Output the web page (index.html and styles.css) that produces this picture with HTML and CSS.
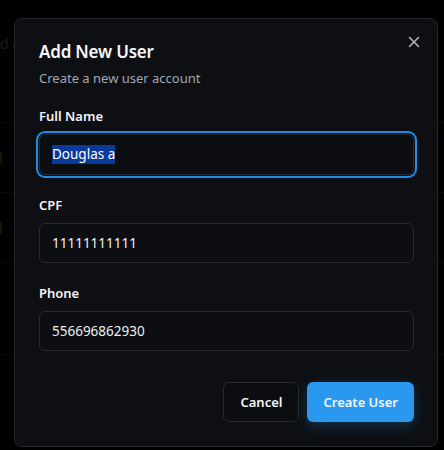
FILE: index.html
```html
<!DOCTYPE html>
<html>
<head>
<meta charset="utf-8">
<link rel="stylesheet" href="styles.css">
</head>
<body>
<div class="page">
  <div class="bg-head"><span class="bg-text">d a</span></div>
  <div class="bg-row"><span class="bg-mark"></span></div>
  <div class="bg-row"><span class="bg-mark"></span></div>
  <div class="bg-row last"></div>
</div>
<div class="overlay">
  <div class="modal">
    <button class="close" aria-label="Close">
      <svg width="12" height="12" viewBox="0 0 12 12"><path d="M1.5 1.5 L10.5 10.5 M10.5 1.5 L1.5 10.5" stroke="#b6bac2" stroke-width="1.5" stroke-linecap="round" fill="none"/></svg>
    </button>
    <div class="header">
      <h2 class="title">Add New User</h2>
      <p class="subtitle">Create a new user account</p>
    </div>
    <div class="form">
      <div class="field">
        <label class="label">Full Name</label>
        <div class="input focused"><span class="sel">Douglas a</span></div>
      </div>
      <div class="field">
        <label class="label">CPF</label>
        <div class="input">11111111111</div>
      </div>
      <div class="field">
        <label class="label">Phone</label>
        <div class="input">556696862930</div>
      </div>
    </div>
    <div class="actions">
      <button class="btn btn-outline">Cancel</button>
      <button class="btn btn-primary">Create User</button>
    </div>
  </div>
</div>
</body>
</html>
```

FILE: styles.css
```css
* { box-sizing: border-box; }
html, body { margin: 0; padding: 0; }
body {
  background: #030405;
  width: 444px;
  height: 450px;
  overflow: hidden;
  font-family: "Noto Sans", "Open Sans", sans-serif;
  color: #f1f3f5;
  position: relative;
}
.page {
  display: flex;
  flex-direction: column;
}
.bg-head {
  height: 123px;
  border-bottom: 1px solid #111418;
  padding: 32px 0 0 0;
}
.bg-text {
  display: inline-block;
  margin-left: 0;
  font-size: 14px;
  color: #3a3d42;
}
.bg-row {
  height: 70px;
  border-bottom: 1px solid #111418;
  display: flex;
  align-items: center;
}
.bg-row.last { height: 92px; }
.bg-mark {
  width: 2px;
  height: 12px;
  background: #3b2e08;
}
.overlay {
  position: absolute;
  inset: 0;
  background: rgba(0,0,0,0.55);
}
.modal {
  position: absolute;
  left: 14px;
  top: 18px;
  width: 424px;
  height: 429px;
  background: #0d0f13;
  border: 1px solid #23272e;
  border-radius: 8px;
  padding: 21px 23px 24px 24px;
  display: flex;
  flex-direction: column;
}
.close {
  position: absolute;
  top: 15px;
  right: 15px;
  width: 16px;
  height: 16px;
  padding: 0;
  background: none;
  border: none;
  display: flex;
  align-items: center;
  justify-content: center;
}
.header { display: flex; flex-direction: column; gap: 4px; }
.title {
  margin: 0;
  font-size: 17px;
  line-height: 24px;
  font-weight: 600;
  color: #f6f7f9;
  letter-spacing: -0.2px;
}
.subtitle {
  margin: 0;
  font-size: 13px;
  line-height: 20px;
  color: #a3a8b0;
}
.form {
  margin-top: 18px;
  display: flex;
  flex-direction: column;
  gap: 20px;
}
.field { display: flex; flex-direction: column; gap: 8px; }
.label {
  font-size: 13px;
  line-height: 20px;
  font-weight: 600;
  color: #f3f4f6;
}
.input {
  height: 40px;
  border: 1px solid #262a31;
  border-radius: 6px;
  background: #0c0e12;
  padding: 0 12px;
  display: flex;
  align-items: center;
  font-size: 13.5px;
  color: #eef0f3;
}
.input.focused {
  height: 41px;
  box-shadow: 0 0 0 1px #0d0f13, 0 0 0 3px #1f8de6;
}
.sel {
  background: #0a3a9c;
  color: #ffffff;
  line-height: 19px;
}
.actions {
  margin-top: auto;
  display: flex;
  justify-content: flex-end;
  gap: 8px;
}
.btn {
  height: 40px;
  border-radius: 6px;
  font-family: inherit;
  font-size: 13px;
  font-weight: 600;
  padding: 0 16px;
  color: #f4f5f7;
}
.btn-outline {
  background: #0b0d10;
  border: 1px solid #262a31;
}
.btn-primary {
  background: #2b98f0;
  border: none;
  box-shadow: 0 4px 14px rgba(43,152,240,0.25);
}
```
